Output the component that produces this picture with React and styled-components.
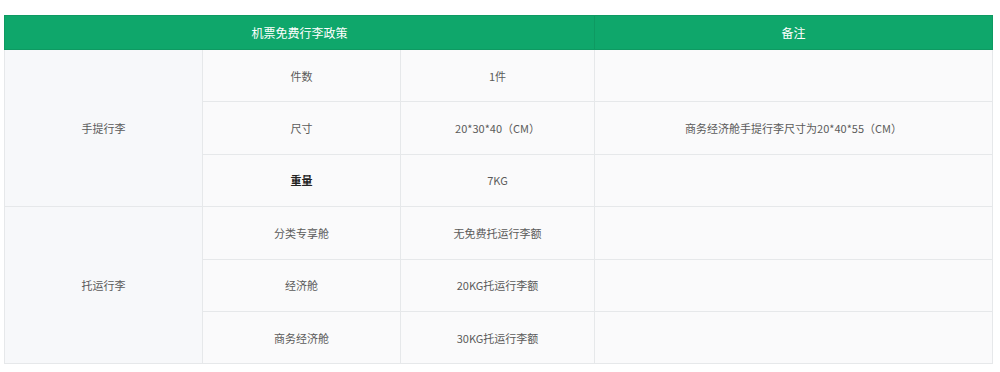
import React from 'react';
import styled, { createGlobalStyle } from 'styled-components';

const GlobalStyle = createGlobalStyle`
  body {
    margin: 0;
    background: #ffffff;
    font-family: "Noto Sans CJK SC", "Noto Sans", sans-serif;
  }
`;

const Page = styled.div`
  padding: 15px 8px 0 4px;
`;

const Table = styled.table`
  width: 988px;
  border-collapse: collapse;
  table-layout: fixed;
  font-size: 11px;
  color: #555;
`;

const HeadCell = styled.th`
  height: 33px;
  padding: 0;
  background: #0fa76b;
  color: #ffffff;
  font-size: 12px;
  font-weight: normal;
  text-align: center;
  border: 1px solid #0e9a62;
`;

const Cell = styled.td`
  height: 51.4px;
  padding: 0;
  text-align: center;
  vertical-align: middle;
  background: ${(p) => (p.$group ? '#f7f8fa' : '#fafafb')};
  border: 1px solid #e6e8ea;
  font-weight: ${(p) => (p.$bold ? 'bold' : 'normal')};
  color: ${(p) => (p.$bold ? '#222' : '#5a5a5a')};
`;

const groups = [
  {
    name: '手提行李',
    rows: [
      { item: '件数', value: '1件', note: '' },
      { item: '尺寸', value: '20*30*40（CM）', note: '商务经济舱手提行李尺寸为20*40*55（CM）' },
      { item: '重量', value: '7KG', note: '', bold: true },
    ],
  },
  {
    name: '托运行李',
    rows: [
      { item: '分类专享舱', value: '无免费托运行李额', note: '' },
      { item: '经济舱', value: '20KG托运行李额', note: '' },
      { item: '商务经济舱', value: '30KG托运行李额', note: '' },
    ],
  },
];

export default function App() {
  return (
    <Page>
      <GlobalStyle />
      <Table>
        <colgroup>
          <col style={{ width: 198 }} />
          <col style={{ width: 198 }} />
          <col style={{ width: 194 }} />
          <col style={{ width: 398 }} />
        </colgroup>
        <thead>
          <tr>
            <HeadCell colSpan={3}>机票免费行李政策</HeadCell>
            <HeadCell>备注</HeadCell>
          </tr>
        </thead>
        <tbody>
          {groups.map((g) =>
            g.rows.map((r, i) => (
              <tr key={g.name + r.item}>
                {i === 0 && (
                  <Cell $group rowSpan={g.rows.length}>
                    {g.name}
                  </Cell>
                )}
                <Cell $bold={r.bold}>{r.item}</Cell>
                <Cell>{r.value}</Cell>
                <Cell>{r.note}</Cell>
              </tr>
            ))
          )}
        </tbody>
      </Table>
    </Page>
  );
}
